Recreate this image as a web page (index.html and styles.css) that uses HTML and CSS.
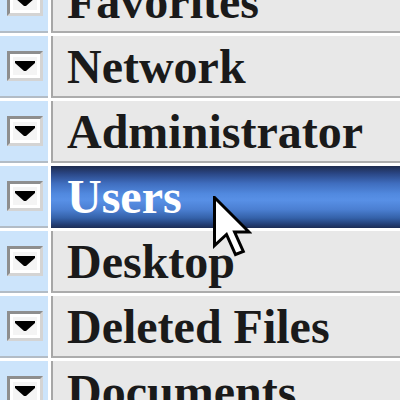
FILE: index.html
```html
<!DOCTYPE html>
<html>
<head>
<meta charset="utf-8">
<link rel="stylesheet" href="styles.css">
</head>
<body>
<div class="list">
  <div class="row"><div class="tog"><span class="btn"><svg viewBox="0 0 20 10" class="tri"><polygon points="0,0 20,0 20,2 11,10 9,10 0,2"/></svg></span></div><div class="cell">Favorites</div></div>
  <div class="row"><div class="tog"><span class="btn"><svg viewBox="0 0 20 10" class="tri"><polygon points="0,0 20,0 20,2 11,10 9,10 0,2"/></svg></span></div><div class="cell">Network</div></div>
  <div class="row"><div class="tog"><span class="btn"><svg viewBox="0 0 20 10" class="tri"><polygon points="0,0 20,0 20,2 11,10 9,10 0,2"/></svg></span></div><div class="cell">Administrator</div></div>
  <div class="row"><div class="tog"><span class="btn"><svg viewBox="0 0 20 10" class="tri"><polygon points="0,0 20,0 20,2 11,10 9,10 0,2"/></svg></span></div><div class="cell selected">Users</div></div>
  <div class="row"><div class="tog"><span class="btn"><svg viewBox="0 0 20 10" class="tri"><polygon points="0,0 20,0 20,2 11,10 9,10 0,2"/></svg></span></div><div class="cell">Desktop</div></div>
  <div class="row"><div class="tog"><span class="btn"><svg viewBox="0 0 20 10" class="tri"><polygon points="0,0 20,0 20,2 11,10 9,10 0,2"/></svg></span></div><div class="cell">Deleted Files</div></div>
  <div class="row"><div class="tog"><span class="btn"><svg viewBox="0 0 20 10" class="tri"><polygon points="0,0 20,0 20,2 11,10 9,10 0,2"/></svg></span></div><div class="cell">Documents</div></div>
</div>
<svg class="cursor" viewBox="-0.5 -0.5 13 22" width="39" height="66"><polygon points="0,0 0,16 4,12.3 7,19 9.6,18 6.7,11.5 11.5,11.5" fill="#fff" stroke="#000" stroke-width="1" stroke-linejoin="miter"/></svg>
</body>
</html>
```
FILE: styles.css
```css
html, body {
  margin: 0;
  padding: 0;
  background: #ffffff;
  width: 400px;
  height: 400px;
  overflow: hidden;
  position: relative;
}
.list {
  margin-top: -29px;
  display: flex;
  flex-direction: column;
  gap: 3px;
}
.row {
  display: grid;
  grid-template-columns: 48px 1fr;
  column-gap: 3px;
  height: 62px;
}
.tog {
  background: #cce4fb;
  border-bottom: 2px solid #b2bcc6;
  display: flex;
  align-items: center;
  justify-content: center;
  padding-left: 1px;
}
.btn {
  box-sizing: border-box;
  width: 36px;
  height: 30px;
  border: 3px solid;
  border-color: #8e8e8e #d4d4d4 #d4d4d4 #8e8e8e;
  box-shadow: inset -3px -3px 0 #ffffff, inset 3px 3px 0 #ffffff;
  background: #f4f4f4;
  display: flex;
  align-items: center;
  justify-content: center;
}
.tri {
  width: 20px;
  height: 10px;
  fill: #000;
  display: block;
}
.cell {
  background: #e8e8e8;
  border-left: 2px solid #a6a6a6;
  border-bottom: 2px solid #acacac;
  padding-left: 14px;
  display: flex;
  align-items: center;
  font-family: "Liberation Serif", "Times New Roman", serif;
  font-weight: bold;
  font-size: 48px;
  color: #1a1a1a;
  white-space: nowrap;
  overflow: hidden;
}
.cell.selected {
  border: none;
  padding-left: 16px;
  padding-bottom: 2px;
  color: #ffffff;
  background: linear-gradient(to bottom,
    #1e2b4e 0%,
    #2a4684 12%,
    #3f6dbe 28%,
    #5189df 45%,
    #5890e6 55%,
    #4b7fd2 70%,
    #3461a8 84%,
    #233f76 94%,
    #1c2d55 100%);
}
.cursor {
  position: absolute;
  left: 213px;
  top: 196px;
}
```
